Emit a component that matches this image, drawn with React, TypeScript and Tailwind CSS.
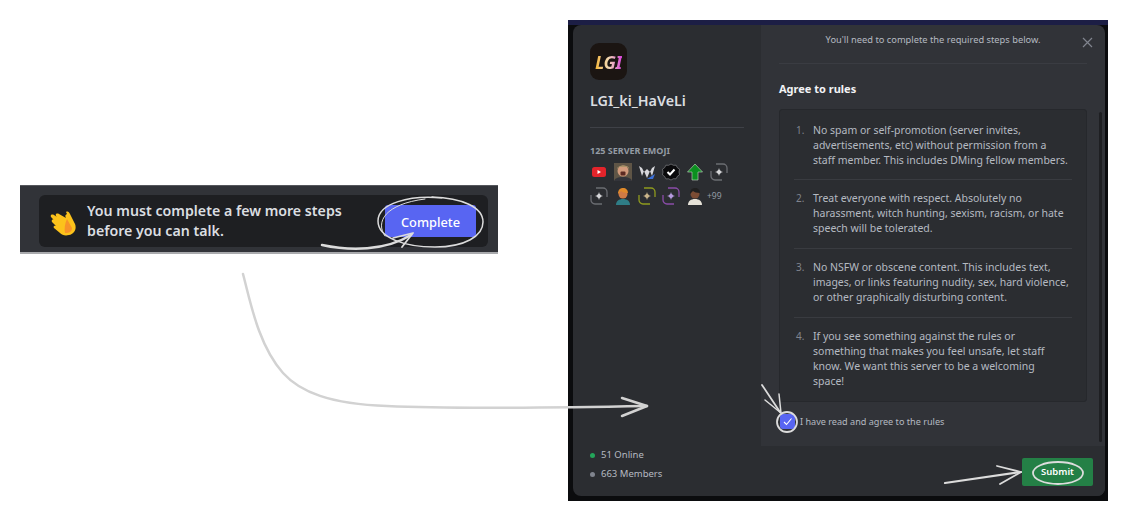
const rules = [
  {
    n: "1.",
    lines: [
      "No spam or self-promotion (server invites,",
      "advertisements, etc) without permission from a",
      "staff member. This includes DMing fellow members.",
    ],
  },
  {
    n: "2.",
    lines: [
      "Treat everyone with respect. Absolutely no",
      "harassment, witch hunting, sexism, racism, or hate",
      "speech will be tolerated.",
    ],
  },
  {
    n: "3.",
    lines: [
      "No NSFW or obscene content. This includes text,",
      "images, or links featuring nudity, sex, hard violence,",
      "or other graphically disturbing content.",
    ],
  },
  {
    n: "4.",
    lines: [
      "If you see something against the rules or",
      "something that makes you feel unsafe, let staff",
      "know. We want this server to be a welcoming",
      "space!",
    ],
  },
];

function WaveEmoji() {
  return (
    <svg width="26" height="25" viewBox="0 0 26 25" className="mt-[5px]">
      <path
        d="M16 1c2-1 3 0 4 2l5 10c2 5-1 10-6 11-4 1-7 0-9-2L4 17c-1-1 0-3 2-2L2 11c-1-2 1-3 2-2L1 6c-1-2 1-3 3-2l3 2-1-1c-1-2 1-3 3-2l7 4c-1-2-1-3 1-4z"
        fill="#fcc21b"
      />
      <path d="M17 8l5 9c0 4-3 5-7 5-1-4 0-10 2-14z" fill="#f79329" />
    </svg>
  );
}

function NudgeBar() {
  return (
    <div className="w-[478px] h-[69px] bg-[#313338] border-t border-[#55575c] border-b-2 border-b-[#a9aaad] pl-[19px] pr-[10px] pt-[9px]">
      <div className="h-[52px] rounded-md bg-[#1e1f22] flex items-center pl-[11px] pr-[12px]">
        <WaveEmoji />
        <div className="ml-[11px] flex-1 text-[14.2px] leading-[20px] font-semibold text-[#dbdee1] whitespace-nowrap">
          <div>You must complete a few more steps</div>
          <div>before you can talk.</div>
        </div>
        <button className="w-[91px] h-[32px] pt-[3px] rounded-[3px] bg-[#5865f2] text-white text-[12.8px] font-medium">
          Complete
        </button>
      </div>
    </div>
  );
}

function Corner({ color, dot = "#d5d6d8" }: { color: string; dot?: string }) {
  return (
    <svg width="18" height="18" viewBox="0 0 18 18">
      <path
        d="M6 1h7a4 4 0 0 1 4 4v5M12 17H5a4 4 0 0 1-4-4V8"
        fill="none"
        stroke={color}
        strokeWidth="1.3"
      />
      <path d="M9 5 10 8 13 9 10 10 9 13 8 10 5 9 8 8z" fill={dot} />
      <circle cx="9" cy="9" r="2" fill={dot} />
    </svg>
  );
}

function Face({ skin, hair, shirt }: { skin: string; hair: string; shirt: string }) {
  return (
    <svg width="18" height="18" viewBox="0 0 18 18">
      <path d="M2 18c0-4 3-6 7-6s7 2 7 6z" fill={shirt} />
      <circle cx="9" cy="7" r="4.5" fill={skin} />
      <path d="M4 7c0-4 2-6 5-6s5 2 5 5c-3 0-6-1-7-2-1 1-2 2-3 3z" fill={hair} />
    </svg>
  );
}

function EmojiGrid() {
  return (
    <div className="mt-[7px] flex flex-col gap-[6px]">
      <div className="flex items-center gap-[6px]">
        <svg width="18" height="18" viewBox="0 0 18 18">
          <rect x="2" y="4" width="14" height="10" rx="2.500" fill="#e3242b" />
          <path d="M7.500 7v4L11 9z" fill="#fff" />
        </svg>
        <svg width="18" height="18" viewBox="0 0 18 18">
          <rect width="18" height="18" fill="#5f5546" />
          <circle cx="9" cy="8" r="5.500" fill="#d19a7c" />
          <path d="M3 6c0-4 12-5 12 0l-2-2H5z" fill="#a79268" />
          <rect x="6.500" y="8.500" width="5" height="4" rx="1" fill="#5d2a22" />
          <path d="M0 18c1-3 4-4 9-4s8 1 9 4z" fill="#33343a" />
        </svg>
        <svg width="18" height="18" viewBox="0 0 18 18">
          <path d="M1 3l3 10 2-5 3 7 3-7 2 5 3-10-3 2-2 4-3-3-3 3-2-4z" fill="#d8d8dc" />
          <path d="M9 16l8-5-2 5z" fill="#3a6fd8" />
        </svg>
        <svg width="18" height="18" viewBox="0 0 18 18">
          <path
            d="M9 1l2.400 1.300 2.700-.1 1.200 2.400 2.200 1.600-.5 2.800.5 2.800-2.200 1.600-1.200 2.400-2.700-.1L9 17l-2.400-1.200-2.700.1-1.200-2.400L.5 11.900 1 9 .5 6.200l2.200-1.600 1.200-2.400 2.700.1z"
            fill="#0a0a0c"
            stroke="#8d8e92"
            strokeWidth="0.6"
          />
          <path d="M5.500 9l2.500 2.500 4.500-5" fill="none" stroke="#fff" strokeWidth="2" />
        </svg>
        <svg width="18" height="18" viewBox="0 0 18 18">
          <path d="M9 1l7.500 8H12v8H6V9H1.500z" fill="#0b8f1f" stroke="#c8d8c8" strokeWidth="0.6" />
        </svg>
        <Corner color="#6b6d72" />
      </div>
      <div className="flex items-center gap-[6px]">
        <Corner color="#6b6d72" />
        <Face skin="#cf7a45" hair="#e08a2a" shirt="#2f7d86" />
        <Corner color="#8f9a1e" dot="#c9b48a" />
        <Corner color="#8a4ca8" dot="#b79ae0" />
        <Face skin="#7b4c34" hair="#202020" shirt="#e6e2d8" />
        <span className="-ml-[3px] text-[8.5px] text-[#949ba4] leading-none">+99</span>
      </div>
    </div>
  );
}

function ServerPanel() {
  return (
    <aside className="w-[188px] shrink-0 bg-[#2b2d31] pt-[18px] pl-[17px] pr-[17px] flex flex-col rounded-l-lg">
      <div className="w-[37px] h-[37px] rounded-[9px] bg-[#1b1512] flex items-center justify-center">
        <span className="text-[18px] font-bold italic leading-none tracking-tight bg-gradient-to-r from-[#f6b52a] via-[#f3d9b0] to-[#d63ad8] bg-clip-text text-transparent">
          LGI
        </span>
      </div>
      <h2 className="mt-[11px] text-[14.3px] leading-[20px] font-semibold text-[#dbdee1]">
        LGI_ki_HaVeLi
      </h2>
      <div className="mt-[16px] h-px bg-[#3f4147]" />
      <div className="mt-[18px] text-[9px] leading-[10px] font-bold text-[#949ba4]">
        125 SERVER EMOJI
      </div>
      <EmojiGrid />
      <div className="mt-auto pb-[15px] flex flex-col gap-[5px] text-[9.500px] leading-[14px] text-[#b5bac1]">
        <div className="flex items-center gap-[6px]">
          <span className="w-[5px] h-[5px] rounded-full bg-[#23a55a]" />
          51 Online
        </div>
        <div className="flex items-center gap-[6px]">
          <span className="w-[5px] h-[5px] rounded-full bg-[#80848e]" />
          663 Members
        </div>
      </div>
    </aside>
  );
}

function RulesPanel() {
  return (
    <section className="relative flex-1 bg-[#313338] flex flex-col rounded-r-lg overflow-hidden">
      <div className="flex-1 pl-[18px] pr-[18px]">
        <div className="h-[39px] border-b border-[#3a3c42] flex justify-center pt-[8px] text-[9.300px] leading-[13px] text-[#b5bac1]">
          You'll need to complete the required steps below.
        </div>
        <h3 className="mt-[17px] text-[11px] leading-[16px] font-bold text-[#f2f3f5]">
          Agree to rules
        </h3>
        <div className="mt-[12px] h-[293px] rounded-[3px] bg-[#2b2d31] border border-[#26282c] px-[14px] pt-[13px]">
          {rules.map((rule, i) => (
            <div
              key={rule.n}
              className={
                i === 0
                  ? "flex pb-[11px]"
                  : "flex pt-[11px] pb-[12px] border-t border-[#393b40]"
              }
            >
              <span className="w-[19px] pl-[2px] shrink-0 text-[10px] leading-[15px] text-[#80848e]">
                {rule.n}
              </span>
              <div className="text-[10.500px] leading-[15px] text-[#b5bac1] whitespace-nowrap">
                {rule.lines.map((line) => (
                  <div key={line}>{line}</div>
                ))}
              </div>
            </div>
          ))}
        </div>
        <label className="mt-[12px] flex items-center gap-[5px] text-[9.100px] leading-[13px] text-[#b5bac1]">
          <span className="w-[15px] h-[15px] rounded-[3px] bg-[#5865f2] flex items-center justify-center ml-[1px]">
            <svg width="11" height="11" viewBox="0 0 11 11">
              <path d="M2 6l2.500 2.500L9.500 2.500" fill="none" stroke="#fff" strokeWidth="1.100" />
            </svg>
          </span>
          I have read and agree to the rules
        </label>
      </div>
      <div className="h-[50px] shrink-0 bg-[#2b2d31] flex justify-end pt-[12px] pr-[12px]">
        <button className="w-[71px] h-[28px] rounded-[2px] bg-[#248046] text-white text-[9.500px] font-semibold">
          Submit
        </button>
      </div>
      <svg className="absolute right-[12px] top-[12px]" width="11" height="11" viewBox="0 0 11 11">
        <path d="M1 1l9 9M10 1L1 10" stroke="#80848e" strokeWidth="1.200" />
      </svg>
      <div className="absolute right-[3px] top-[87px] w-[3px] h-[330px] rounded-full bg-[#1e1f22]" />
    </section>
  );
}

// hand-drawn notes sitting on top of the screenshots
function Annotations() {
  return (
    <svg className="absolute left-0 top-0 pointer-events-none" width="1128" height="521" viewBox="0 0 1128 521" fill="none">
      <g stroke="#d2d2d2" strokeLinecap="round" strokeLinejoin="round">
        <path d="M243 274C250 300 258 345 283 373C300 392 330 404 387 406C430 408 540 408 647 406" strokeWidth="2.500" />
        <path d="M622 398L647 406L622 416" strokeWidth="2.500" />
      </g>
      <g stroke="#dcdcdc" strokeLinecap="round" strokeLinejoin="round">
        <path d="M442 198C410 195 378 203 378 221C378 238 405 247 435 247C465 247 483 236 483 222C483 207 462 198 432 197" strokeWidth="1.500" />
        <path d="M385 236C375 222 385 204 425 199" strokeWidth="1" />
        <path d="M322 245C350 251 385 251 411 235" strokeWidth="2.500" />
        <path d="M393 238L413 233L402 247" strokeWidth="1.800" />
        <ellipse cx="787" cy="422" rx="10" ry="10" strokeWidth="1.800" />
        <path d="M762 385L780 412" strokeWidth="1.800" />
        <path d="M765 400L781 413L779 394" strokeWidth="1.500" />
        <ellipse cx="1058" cy="473" rx="25" ry="11" strokeWidth="1.800" />
        <path d="M945 483L1021 472" strokeWidth="2.200" />
        <path d="M997 466L1021 472L1000 484" strokeWidth="1.800" />
      </g>
    </svg>
  );
}

export default function App() {
  return (
    <div className="relative w-[1128px] h-[521px] bg-white overflow-hidden flex items-start font-['Noto_Sans',sans-serif]">
      <div className="mt-[185px] ml-[20px]">
        <NudgeBar />
      </div>
      <div className="mt-[20px] ml-[70px] w-[540px] h-[481px] bg-[#0b0c0e] border-t-[5px] border-t-[#1c1e45] pl-[5px] pr-[3px] pb-[5px]">
        <div className="h-full flex">
          <ServerPanel />
          <RulesPanel />
        </div>
      </div>
      <Annotations />
    </div>
  );
}
